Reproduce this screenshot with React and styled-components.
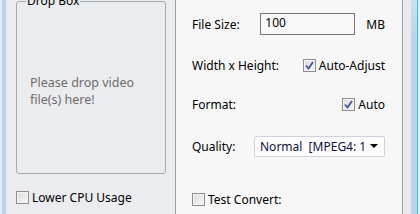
import React from "react";
import styled, { createGlobalStyle } from "styled-components";

const GlobalStyle = createGlobalStyle`
  html, body {
    margin: 0;
    padding: 0;
    overflow: hidden;
  }
  body {
    font-family: "Noto Sans", "DejaVu Sans", sans-serif;
    font-size: 12px;
    color: #000;
  }
`;

const Window = styled.div`
  width: 420px;
  height: 214px;
  display: flex;
  overflow: hidden;
  background: #ebecef;
`;

const FrameEdge = styled.div`
  width: ${(p) => p.width}px;
  flex: none;
  background: linear-gradient(to right, #e4ecf5 0 2px, #bcd3ea 2px);
`;

const RightEdge = styled.div`
  width: 15px;
  flex: none;
  display: flex;
`;

const EdgeGray = styled.div`
  width: 8px;
  background: #e8eaee;
`;

const EdgeBlue = styled.div`
  width: 6px;
  background: linear-gradient(to bottom, #cfdff0, #bcd3ea 40px);
`;

const EdgeCyan = styled.div`
  width: 1px;
  background: #2ac4ef;
`;

const LeftPanel = styled.div`
  width: 169px;
  flex: none;
  padding: 0 9px 0 10px;
  box-sizing: border-box;
  display: flex;
  flex-direction: column;
  background: #ebecef;
`;

const GroupBox = styled.fieldset`
  margin: -6px 0 0;
  padding: 0;
  height: 180px;
  box-sizing: border-box;
  border: 1px solid #a6a8ab;
  border-radius: 3px;
`;

const Legend = styled.legend`
  margin-left: 9px;
  padding: 0 1px;
  color: #000;
  line-height: 14px;
`;

const DropHint = styled.div`
  color: #6d6d6d;
  line-height: 17px;
  font-size: 12.5px;
  padding: 66px 0 0 13px;
`;

const Divider = styled.div`
  width: 1px;
  flex: none;
  background: #9d9fa2;
`;

const RightPanel = styled.div`
  width: 226px;
  flex: none;
  background: #f7f7f7;
  padding: 13px 17px 0 16px;
  box-sizing: border-box;
  display: flex;
  flex-direction: column;
`;

const Row = styled.div`
  display: flex;
  align-items: center;
  height: 22px;
  margin-top: ${(p) => p.top || 0}px;
`;

const Label = styled.span`
  flex: 1;
  white-space: nowrap;
`;

const TextBox = styled.div`
  width: 95px;
  height: 22px;
  box-sizing: border-box;
  border: 1px solid #6f7b6a;
  background: #f9f9f9;
  padding: 0 4px;
  line-height: 17px;
`;

const Unit = styled.span`
  margin-left: 11px;
`;

const CheckLabel = styled.label`
  display: flex;
  align-items: center;
  gap: 3px;
  white-space: nowrap;
`;

const Box = styled.span`
  width: 13px;
  height: 13px;
  box-sizing: border-box;
  flex: none;
  border: 1px solid #8f8f8f;
  background: linear-gradient(135deg, #dcdcdc, #f7f7f7);
  box-shadow: inset 0 0 0 1px #f4f4f4;
  display: flex;
  align-items: center;
  justify-content: center;
`;

const Select = styled.div`
  width: 131px;
  height: 21px;
  box-sizing: border-box;
  border: 1px solid #ccd3dc;
  border-radius: 2px;
  background: #fcfcfd;
  display: flex;
  align-items: center;
  padding: 0 6px 0 5px;
  overflow: hidden;
  color: #12123a;
`;

const SelectText = styled.span`
  flex: 1;
  white-space: pre;
  overflow: hidden;
`;

const Arrow = styled.span`
  width: 0;
  height: 0;
  border-left: 4px solid transparent;
  border-right: 4px solid transparent;
  border-top: 4px solid #000;
  margin-left: 6px;
`;

const LowerRow = styled.div`
  margin-top: 15px;
`;

const Check = ({ checked, children }) => (
  <CheckLabel>
    <Box>
      {checked && (
        <svg width="9" height="9" viewBox="0 0 9 9">
          <path d="M1 4.5 L3.5 7.5 L8 1" fill="none" stroke="#42579a" strokeWidth="1.8" />
        </svg>
      )}
    </Box>
    {children}
  </CheckLabel>
);

export default function App() {
  return (
    <>
      <GlobalStyle />
      <Window>
        <FrameEdge width={6} />
        <LeftPanel>
          <GroupBox>
            <Legend>Drop Box</Legend>
            <DropHint>
              Please drop video
              <br />
              file(s) here!
            </DropHint>
          </GroupBox>
          <LowerRow>
            <Check>Lower CPU Usage</Check>
          </LowerRow>
        </LeftPanel>
        <Divider />
        <RightPanel>
          <Row>
            <Label>File Size:</Label>
            <TextBox>100</TextBox>
            <Unit>MB</Unit>
          </Row>
          <Row top={19}>
            <Label>Width x Height:</Label>
            <Check checked>Auto-Adjust</Check>
          </Row>
          <Row top={17}>
            <Label>Format:</Label>
            <Check checked>Auto</Check>
          </Row>
          <Row top={20}>
            <Label>Quality:</Label>
            <Select>
              <SelectText>Normal  [MPEG4: 1-Pass]</SelectText>
              <Arrow />
            </Select>
          </Row>
          <Row top={31}>
            <Check>Test Convert:</Check>
          </Row>
        </RightPanel>
        <Divider />
        <RightEdge>
          <EdgeGray />
          <EdgeBlue />
          <EdgeCyan />
        </RightEdge>
      </Window>
    </>
  );
}
